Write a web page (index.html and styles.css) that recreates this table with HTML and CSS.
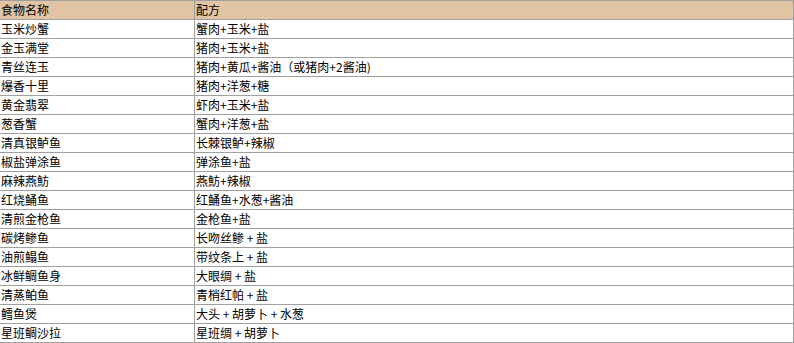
FILE: index.html
```
<!DOCTYPE html>
<html lang="zh">
<head>
<meta charset="utf-8">
<link rel="stylesheet" href="styles.css">
</head>
<body>
<table class="recipes">
<thead>
<tr><th class="c1">食物名称</th><th class="c2">配方</th></tr>
</thead>
<tbody>
<tr><td class="c1">玉米炒蟹</td><td class="c2">蟹肉+玉米+盐</td></tr>
<tr><td class="c1">金玉满堂</td><td class="c2">猪肉+玉米+盐</td></tr>
<tr><td class="c1">青丝连玉</td><td class="c2">猪肉+黄瓜+酱油（或猪肉+2酱油)</td></tr>
<tr><td class="c1">爆香十里</td><td class="c2">猪肉+洋葱+糖</td></tr>
<tr><td class="c1">黄金翡翠</td><td class="c2">虾肉+玉米+盐</td></tr>
<tr><td class="c1">葱香蟹</td><td class="c2">蟹肉+洋葱+盐</td></tr>
<tr><td class="c1">清真银鲈鱼</td><td class="c2">长棘银鲈+辣椒</td></tr>
<tr><td class="c1">椒盐弹涂鱼</td><td class="c2">弹涂鱼+盐</td></tr>
<tr><td class="c1">麻辣燕魴</td><td class="c2">燕魴+辣椒</td></tr>
<tr><td class="c1">红烧鲬鱼</td><td class="c2">红鲬鱼+水葱+酱油</td></tr>
<tr><td class="c1">清煎金枪鱼</td><td class="c2">金枪鱼+盐</td></tr>
<tr><td class="c1">碳烤鲹鱼</td><td class="c2">长吻丝鲹 + 盐</td></tr>
<tr><td class="c1">油煎鳎鱼</td><td class="c2">带纹条上 + 盐</td></tr>
<tr><td class="c1">冰鲜鲷鱼身</td><td class="c2">大眼绸 + 盐</td></tr>
<tr><td class="c1">清蒸鲌鱼</td><td class="c2">青梢红帕 + 盐</td></tr>
<tr><td class="c1">鳕鱼煲</td><td class="c2">大头 + 胡萝卜 + 水葱</td></tr>
<tr><td class="c1">星班鲷沙拉</td><td class="c2">星班绸 + 胡萝卜</td></tr>
</tbody>
</table>
</body>
</html>
```
FILE: styles.css
```
html, body {
  margin: 0;
  padding: 0;
  background: #ffffff;
}
.recipes {
  border-collapse: separate;
  border-spacing: 0;
  border-top: 1px solid #a0a0a0;
  width: 794px;
  table-layout: fixed;
  font-family: "Noto Sans CJK SC", "Microsoft YaHei", sans-serif;
  font-size: 12px;
  color: #000;
}
.recipes th, .recipes td {
  height: 18px;
  line-height: 18px;
  padding: 0 0 0 1px;
  border-right: 1px solid #a0a0a0;
  border-bottom: 1px solid #a0a0a0;
  text-align: left;
  font-weight: normal;
  white-space: nowrap;
  overflow: hidden;
  box-sizing: content-box;
}
.recipes th {
  background: #e0c4a4;
}
.recipes .c1 {
  width: 193px;
}
.recipes .c2 {
  width: 597px;
}
```
